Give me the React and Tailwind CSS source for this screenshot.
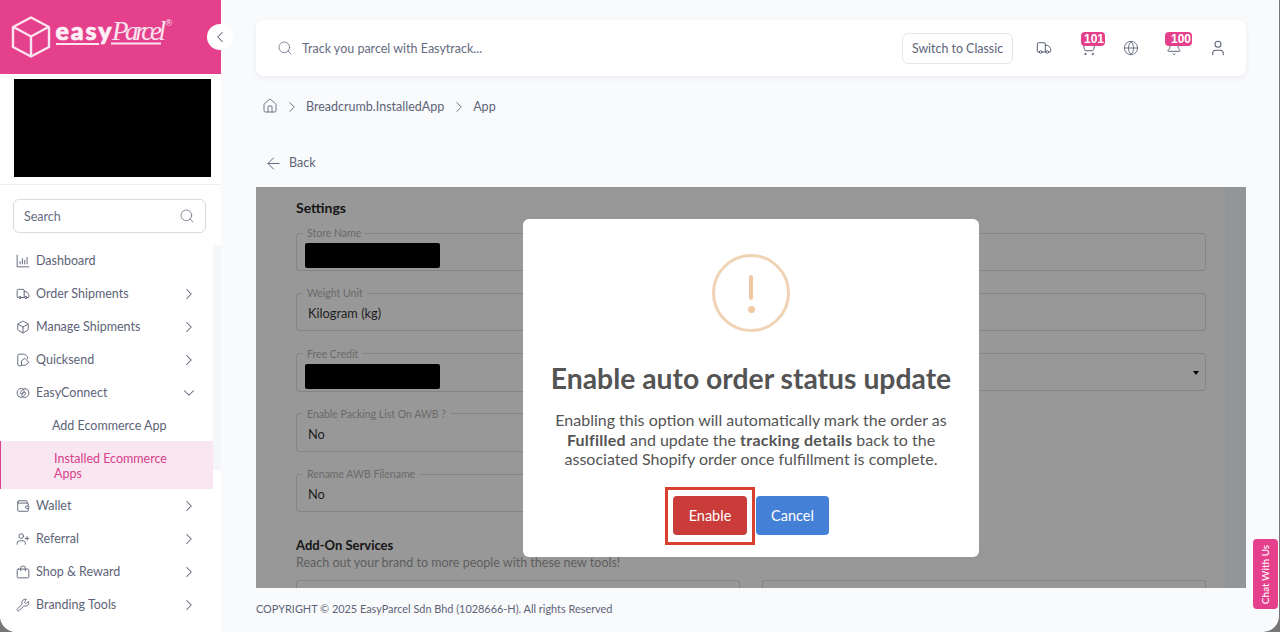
import React from "react";
import { ArrowLeft, Bell, Box, ChevronDown, ChevronLeft, ChevronRight, Globe, House, Search, ShoppingCart, Truck, User, UserPlus, Wallet, Wrench } from "lucide-react";

const font = { fontFamily: "Lato, sans-serif" };

const Svg = ({ children }) => (
    <svg viewBox="0 0 24 24" className="w-[14px] h-[14px]" fill="none" stroke="currentColor" strokeWidth="1.6" strokeLinecap="round" strokeLinejoin="round">
        {children}
    </svg>
);

const ChartIcon = () => (
    <Svg>
        <path d="M2 2v20h20" />
        <path d="M7 17v-4M11 17V8M15 17v-6M19 17V6" />
    </Svg>
);

const SendIcon = () => (
    <Svg>
        <path d="M9 22H6a3 3 0 0 1-3-3V5a3 3 0 0 1 3-3h9l5 5v3" />
        <path d="M10 13l5-4 7 7-6 5h-6z" />
    </Svg>
);

const ConnectIcon = () => (
    <Svg>
        <path d="M9 20a8 8 0 0 1-3-15c4-2 8 0 8 3 0 3-4 6-6 5s1-6 6-8" />
        <path d="M15 4a8 8 0 0 1 3 15c-4 2-8 0-8-3 0-3 4-6 6-5s-1 6-6 8" />
    </Svg>
);

const ShopIcon = () => (
    <Svg>
        <rect x="2" y="7" width="20" height="15" rx="2" />
        <path d="M8 10V5a3 3 0 0 1 3-3h2a3 3 0 0 1 3 3v5" />
    </Svg>
);

const menu = [
    { label: "Dashboard", icon: <ChartIcon /> },
    { label: "Order Shipments", icon: <Truck size={14} strokeWidth={1.6} />, arrow: true },
    { label: "Manage Shipments", icon: <Box size={14} strokeWidth={1.6} />, arrow: true },
    { label: "Quicksend", icon: <SendIcon />, arrow: true },
];

const menuBottom = [
    { label: "Wallet", icon: <Wallet size={14} strokeWidth={1.6} />, arrow: true },
    { label: "Referral", icon: <UserPlus size={14} strokeWidth={1.6} />, arrow: true },
    { label: "Shop & Reward", icon: <ShopIcon />, arrow: true },
    { label: "Branding Tools", icon: <Wrench size={14} strokeWidth={1.6} />, arrow: true },
];

const MenuItem = ({ label, icon, arrow }) => (
    <div className="flex items-center h-[33px] pl-4 pr-[15px] text-[12.500px] text-[#5d6377]">
        <span className="w-5 shrink-0">{icon}</span>
        <span className="flex-1 pt-[2px]">{label}</span>
        {arrow && <ChevronRight size={18} strokeWidth={1.4} />}
    </div>
);

const Logo = () => (
    <svg viewBox="0 0 180 74" className="w-[180px] h-[74px]" fill="none" stroke="#fbe3ef">
        <path d="M31 17.500l18 9.500v20l-18 9.500-18-9.500v-20z" strokeWidth="2.400" strokeLinejoin="round" />
        <path d="M13.500 27l17.500 9.500 17.500-9.500M31 36.500v19.500" strokeWidth="2.400" />
        <text x="55.500" y="40" fill="#fdf0f6" stroke="#fdf0f6" strokeWidth="0.700" fontFamily="Lato, sans-serif" fontWeight="900" fontSize="25" textLength="56">easy</text>
        <text x="112" y="40" fill="#fbe3ef" stroke="none" fontFamily="Liberation Serif, serif" fontStyle="italic" fontSize="27" textLength="54">Parcel</text>
        <path d="M56 44h43M111 43.500h50" strokeWidth="1.800" />
        <text x="165.500" y="26" fill="#fbe3ef" stroke="none" fontFamily="Liberation Sans, sans-serif" fontSize="9">®</text>
    </svg>
);

const Sidebar = () => (
    <div className="relative w-[221px] shrink-0 h-full bg-white rounded-bl-[16px]">
        <div className="h-[74px] bg-[#e5408c]">
            <Logo />
        </div>
        <button className="absolute left-[207px] top-[24px] w-[26px] h-[26px] rounded-full bg-white flex items-center justify-center text-[#5d6377] z-10">
            <ChevronLeft size={18} strokeWidth={1.4} />
        </button>
        <div className="h-[111px] pt-[5px] pl-[14px] pr-[10px] border-b border-[#eeeeee]">
            <div className="h-[98px] bg-black" />
        </div>
        <div className="mx-[13px] mt-[14px] mb-[11px] w-[193px] h-[34px] border border-[#d9dbe0] rounded-md flex items-center justify-between px-[10px] text-[12.500px] text-[#666c80]">
            <span className="pt-[2px]">Search</span>
            <Search size={16} strokeWidth={1.2} />
        </div>
        <div className="absolute left-[213px] top-[245px] w-[8px] h-[225px] bg-[#f4f6fa]" />
        <div className="w-[213px]">
            {menu.map((item) => (
                <MenuItem key={item.label} {...item} />
            ))}
            <div className="flex items-center h-[33px] pl-4 pr-[15px] text-[12.500px] text-[#5d6377]">
                <span className="w-5 shrink-0"><ConnectIcon /></span>
                <span className="flex-1 pt-[2px]">EasyConnect</span>
                <ChevronDown size={18} strokeWidth={1.4} />
            </div>
            <div className="h-[32px] flex items-center pl-[52px] pt-[2px] text-[12.500px] text-[#5d6377]">Add Ecommerce App</div>
            <div className="h-[48px] bg-[#f8e7f1] border-l-[1.500px] border-[#d9458b] pl-[53px] pr-10 pt-[2px] flex items-center text-[12.500px] leading-[15px] text-[#d9418a]">
                Installed Ecommerce Apps
            </div>
            {menuBottom.map((item) => (
                <MenuItem key={item.label} {...item} />
            ))}
        </div>
    </div>
);

const Badge = ({ children, className }) => (
    <span className={`absolute rounded-[4px] bg-[#e5408c] text-white text-[12px] leading-[14px] font-bold text-right pr-[1px] ${className}`} style={{ fontFamily: "Liberation Sans, sans-serif" }}>
        {children}
    </span>
);

const TopBar = () => (
    <div className="h-[56px] bg-white rounded-lg shadow-[0_2px_6px_rgba(30,40,70,0.06)] flex items-center pl-[21px] pr-[19px] text-[#666c80]">
        <Search size={16} strokeWidth={1.2} />
        <span className="ml-[9px] pt-[2px] text-[12.500px] flex-1">Track you parcel with Easytrack...</span>
        <button className="w-[111px] h-[31px] pt-[2px] border border-[#e4e6ea] rounded-md text-[12.400px] text-[#5d6377]">Switch to Classic</button>
        <div className="flex items-center ml-[24px] gap-[27px] text-[#5d6377]">
            <Truck size={16} strokeWidth={1.5} className="mr-[1px] ml-[-1px]" />
            <span className="relative">
                <ShoppingCart size={16} strokeWidth={1.5} />
                <Badge className="left-[1px] top-[-8px] w-[24px]">101</Badge>
            </span>
            <Globe size={16} strokeWidth={1.3} />
            <span className="relative">
                <Bell size={16} strokeWidth={1.5} />
                <Badge className="left-[-1px] top-[-8px] w-[27px]">100</Badge>
            </span>
            <User size={18} strokeWidth={1.4} />
        </div>
    </div>
);

const Field = ({ label, children }) => (
    <fieldset className="relative h-[44px] border border-[#848484] rounded-[3px] px-[11px] mb-[16.250px] min-w-0">
        <legend className="ml-[-5px] px-1 text-[10.500px] leading-[12px] text-[#6a6a6a]">{label}</legend>
        <div className="text-[12.800px] text-[#1f1f1f] pt-[5px]">{children}</div>
    </fieldset>
);

const Redacted = () => <div className="ml-[-3px] mt-[-1px] w-[135px] h-[25px] bg-black rounded-[2px]" />;

const Panel = () => (
    <div className="relative h-[401px] overflow-hidden bg-[#989898]">
        <div className="absolute right-0 top-0 bottom-0 w-[21px] bg-[#939596]" />
        <div className="relative pl-[40px] pr-[40px] pt-[12px]">
            <h2 className="text-[14px] leading-[18px] font-bold text-[#151515] mb-[10px]">Settings</h2>
            <div className="grid grid-cols-2 gap-x-[22px]">
                <div>
                    <Field label="Store Name"><Redacted /></Field>
                    <Field label="Weight Unit">Kilogram (kg)</Field>
                    <Field label="Free Credit"><Redacted /></Field>
                    <Field label="Enable Packing List On AWB ?">No</Field>
                    <Field label="Rename AWB Filename">No</Field>
                </div>
                <div className="pt-[6px]">
                    <div className="h-[38px] border border-[#848484] rounded-[3px] mb-[22px] pl-[207px] pt-[9px] text-[13px] text-[#1f1f1f]">n</div>
                    <div className="h-[38px] border border-[#848484] rounded-[3px] mb-[22px]" />
                    <div className="relative h-[38px] border border-[#848484] rounded-[3px]">
                        <span className="absolute right-[6px] top-[17px] w-0 h-0 border-x-[3.500px] border-x-transparent border-t-[4px] border-t-black" />
                    </div>
                </div>
            </div>
            <h2 className="mt-[8px] text-[13px] leading-[18px] font-bold text-[#151515]">Add-On Services</h2>
            <p className="text-[12.500px] leading-[18px] text-[#5e5e5e]">Reach out your brand to more people with these new tools!</p>
            <div className="grid grid-cols-2 gap-x-[22px] mt-[8px]">
                <div className="h-[38px] border border-[#848484] rounded-[3px]" />
                <div className="h-[38px] border border-[#848484] rounded-[3px]" />
            </div>
        </div>
        <Modal />
    </div>
);

const Modal = () => (
    <div className="absolute left-[267px] top-[32px] w-[456px] h-[338px] bg-white rounded-md flex flex-col items-center pt-[35px]">
        <div className="w-[78px] h-[78px] rounded-full border-[3px] border-[#f0d3b5] flex flex-col items-center pt-[18px]">
            <span className="w-[4px] h-[25px] rounded-sm bg-[#efc9a3]" />
            <span className="w-[7px] h-[7px] mt-[6px] rounded-full bg-[#efc9a3]" />
        </div>
        <h1 className="mt-[28px] text-[28.300px] leading-[36px] font-bold text-[#545454]">Enable auto order status update</h1>
        <p className="mt-[14px] w-[420px] text-center text-[16px] leading-[19.500px] text-[#545454]">
            Enabling this option will automatically mark the order as <b className="tracking-[0.24px]">Fulfilled</b> and update the <b className="tracking-[0.24px]">tracking details</b> back to the associated Shopify order once fulfillment is complete.
        </p>
        <div className="mt-[27px] flex gap-[9px]">
            <button className="relative w-[74px] h-[39px] pt-[2px] rounded bg-[#c93c39] text-white text-[14.500px]">
                Enable
                <span className="absolute left-[-8px] right-[-8px] top-[-9px] bottom-[-10px] border-[3px] border-[#d9402e]" />
            </button>
            <button className="w-[73px] h-[39px] pt-[2px] rounded bg-[#4480d6] text-white text-[14.500px]">Cancel</button>
        </div>
    </div>
);

const App = () => {
    return (
        <div className="h-[632px] w-[1280px] overflow-hidden bg-[#777777]" style={font}>
            <div className="relative flex h-full w-[1279px] bg-[#f8fafc] rounded-b-[16px] overflow-hidden">
                <Sidebar />
                <div className="flex-1 min-w-0 flex flex-col pl-[35px] pr-[33px] pt-[20px]">
                    <TopBar />
                    <div className="h-[31px] mt-[15px] flex items-center text-[12.500px] text-[#5d6377]">
                        <House size={16} strokeWidth={1.3} className="ml-[6px] mt-[-1px]" />
                        <ChevronRight size={18} strokeWidth={1.2} className="ml-[5px] mr-[5px]" />
                        <span className="pt-[2px]">Breadcrumb.InstalledApp</span>
                        <ChevronRight size={18} strokeWidth={1.2} className="ml-[6px] mr-[5px]" />
                        <span className="pt-[2px]">App</span>
                    </div>
                    <div className="h-[40px] mt-[21px] mb-[4px] flex items-center text-[12.500px] text-[#5d6377]">
                        <ArrowLeft size={19} strokeWidth={1.2} className="ml-[8px] mr-[6px]" />
                        <span>Back</span>
                    </div>
                    <Panel />
                    <div className="mt-[14px] text-[10.900px] leading-[14px] text-[#5d6377]">COPYRIGHT © 2025 EasyParcel Sdn Bhd (1028666-H). All rights Reserved</div>
                </div>
                <button className="absolute right-[1px] top-[539px] w-[25px] h-[70px] rounded bg-[#e5408c] text-white text-[10px] font-medium flex items-center justify-center">
                    <span className="-rotate-90 whitespace-nowrap">Chat With Us</span>
                </button>
            </div>
        </div>
    );
};

export default App;
